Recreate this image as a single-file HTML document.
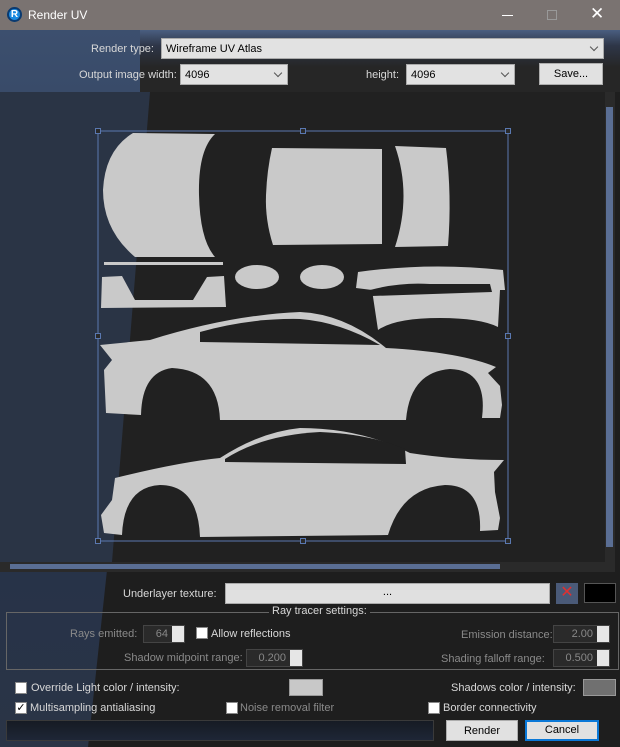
<!DOCTYPE html>
<html><head><style>
*{box-sizing:border-box;margin:0;padding:0}
body{width:620px;height:747px;overflow:hidden;background:#1f1f1f;font-family:"Liberation Sans",sans-serif;font-size:11px;color:#ddd;position:relative}
.a{position:absolute}
.lbl{position:absolute;color:#d8d8d8;white-space:nowrap}
.dis{color:#8a8a8a}
.combo{position:absolute;background:#e2e2e2;border:1px solid #aaa;color:#000;padding:4px 4px;height:21px}
.combo:after{content:"";position:absolute;right:6px;top:5px;width:5px;height:5px;border-right:1px solid #555;border-bottom:1px solid #555;transform:rotate(45deg)}
.btn{position:absolute;background:#e1e1e1;border:1px solid #adadad;color:#000;text-align:center;line-height:20px}
.cb{position:absolute;width:12px;height:12px;background:#fff;border:1px solid #888}
.spin{position:absolute;background:#2a2a2a;border:1px solid #444;color:#888;text-align:right;padding:2px 16px 0 0;height:18px}
.spin:after{content:"";position:absolute;right:0;top:0;width:12px;height:16px;background:#e6e6e6}
</style></head><body>
<div class="a" style="left:0;top:30px;width:620px;height:717px;background:#1e1e1e"></div>
<div class="a" style="left:0;top:30px;width:620px;height:717px;background:linear-gradient(180deg,#3c4f6e,#25324a 60%,#2a3446);clip-path:polygon(0 0,165px 0,88px 717px,0 717px)"></div>
<div class="a" style="left:140px;top:30px;width:480px;height:62px;background:linear-gradient(180deg,#4a5e80 0,#2e3648 25%,#262626 60%)"></div>
<!-- title -->
<div class="a" style="left:0;top:0;width:620px;height:30px;background:#7a7371"></div>
<div class="a" style="left:7px;top:7px;width:15px;height:15px;border-radius:50%;background:#1a8ae0;border:2px solid #0a3a70;color:#fff;font-size:10px;text-align:center;line-height:11px;font-weight:bold">R</div>
<div class="lbl" style="left:28px;top:8px;color:#fff;font-size:12px">Render UV</div>
<div class="a" style="left:502px;top:15px;width:11px;height:1px;background:#fff"></div>
<div class="a" style="left:547px;top:10px;width:10px;height:10px;border:1px solid #999"></div>
<div class="lbl" style="left:590px;top:4px;color:#fff;font-size:17px">✕</div>
<!-- row1 -->
<div class="lbl" style="left:91px;top:43px">Render type:</div>
<div class="combo" style="left:161px;top:38px;width:443px">Wireframe UV Atlas</div>
<div class="lbl" style="left:79px;top:69px">Output image width:</div>
<div class="combo" style="left:180px;top:64px;width:108px">4096</div>
<div class="lbl" style="left:366px;top:69px">height:</div>
<div class="combo" style="left:406px;top:64px;width:109px">4096</div>
<div class="btn" style="left:539px;top:63px;width:64px;height:22px">Save...</div>
<!-- preview -->
<div class="a" style="left:0;top:92px;width:605px;height:470px;background:#212121"></div>
<div class="a" style="left:0;top:92px;width:605px;height:470px;background:#2b3649;clip-path:polygon(0 0,150px 0,112px 470px,0 470px);opacity:.9"></div>
<div class="a" style="left:605px;top:92px;width:10px;height:470px;background:#2a2a2a"></div>
<div class="a" style="left:606px;top:107px;width:7px;height:440px;background:#5a6e94"></div>
<div class="a" style="left:0;top:562px;width:615px;height:10px;background:#2a2a2a"></div>
<div class="a" style="left:10px;top:564px;width:490px;height:5px;background:#5a6e94"></div>
<svg class="a" style="left:0;top:0" width="620" height="747">
<g fill="#c9c9c9">
<path d="M133,133 L215,134 Q198,150 199,195 Q200,240 215,257 L135,257 Q103,230 103,190 Q105,150 133,133Z"/>
<path d="M272,148 L382,149 L382,244 L273,245 Q265,220 266,195 Q267,170 272,148Z"/>
<path d="M395,146 L446,148 Q452,195 448,246 L395,247 Q412,195 395,146Z"/>
<rect x="104" y="262" width="119" height="3"/>
<path d="M102,277 L122,276 L135,300 L193,300 L207,277 L224,276 L226,307 L101,308Z"/>
<ellipse cx="257" cy="277" rx="22" ry="12"/>
<ellipse cx="322" cy="277" rx="22" ry="12"/>
<path d="M358,272 Q430,262 503,270 L505,290 L500,290 L498,327 Q480,318 440,318 Q395,318 378,330 L372,290 L356,288Z"/>
<path d="M100,345 L150,340 Q230,315 300,312 Q345,314 386,348 Q460,352 496,367 L488,373 L500,386 L502,405 L500,418 L482,418 Q488,370 450,369 Q410,372 406,420 L220,420 Q218,370 172,368 Q142,372 141,415 L106,413 L104,370 L112,360Z"/>
<path d="M115,478 Q180,462 220,458 Q260,432 300,428 Q360,428 410,453 Q455,460 504,460 L494,472 L495,492 L500,518 L498,530 L480,531 Q482,485 445,485 Q402,488 388,535 L200,537 Q198,485 160,485 Q124,487 122,535 L104,533 L101,515 L112,500Z"/>
</g>
<g fill="#212121">
<path d="M200,332 Q250,318 300,319 Q340,322 380,345 L200,342Z"/>
<path d="M225,459 Q262,435 320,432 Q370,434 405,449 L406,464 L225,462Z"/>
<path d="M140,285 L190,285 L180,298 L150,298Z"/>
<path d="M370,290 Q400,282 430,284 L490,284 L492,292 L372,296Z"/>
</g>
<rect x="98" y="131" width="410" height="410" fill="none" stroke="#5a78b0" stroke-width="1"/>
<g fill="#2a2a2a" stroke="#5a78b0">
<rect x="95.5" y="128.5" width="5" height="5"/><rect x="300.5" y="128.5" width="5" height="5"/><rect x="505.5" y="128.5" width="5" height="5"/>
<rect x="95.5" y="333.5" width="5" height="5"/><rect x="505.5" y="333.5" width="5" height="5"/>
<rect x="95.5" y="538.5" width="5" height="5"/><rect x="300.5" y="538.5" width="5" height="5"/><rect x="505.5" y="538.5" width="5" height="5"/>
</g>
</svg>
<!-- bottom -->
<div class="lbl" style="left:123px;top:588px">Underlayer texture:</div>
<div class="a" style="left:225px;top:583px;width:325px;height:21px;background:#e0e0e0;border:1px solid #aaa;color:#000;text-align:center;line-height:16px">...</div>
<div class="a" style="left:556px;top:583px;width:22px;height:21px;background:#4a5a78;color:#e03030;text-align:center;font-size:16px;line-height:20px">✕</div>
<div class="a" style="left:584px;top:583px;width:32px;height:20px;background:#000;border:1px solid #555"></div>
<div class="a" style="left:6px;top:612px;width:613px;height:58px;border:1px solid #666;border-top:none"></div>
<div class="a" style="left:370px;top:612px;width:249px;height:1px;background:#666"></div>
<div class="a" style="left:6px;top:612px;width:263px;height:1px;background:#666"></div>
<div class="lbl" style="left:272px;top:605px">Ray tracer settings:</div>
<div class="lbl dis" style="left:70px;top:628px">Rays emitted:</div>
<div class="spin" style="left:143px;top:625px;width:42px">64</div>
<div class="cb" style="left:196px;top:627px"></div>
<div class="lbl" style="left:211px;top:628px">Allow reflections</div>
<div class="lbl dis" style="left:461px;top:629px">Emission distance:</div>
<div class="spin" style="left:553px;top:625px;width:57px">2.00</div>
<div class="lbl dis" style="left:124px;top:652px">Shadow midpoint range:</div>
<div class="spin" style="left:246px;top:649px;width:57px">0.200</div>
<div class="lbl dis" style="left:441px;top:653px">Shading falloff range:</div>
<div class="spin" style="left:553px;top:649px;width:57px">0.500</div>
<div class="cb" style="left:15px;top:682px"></div>
<div class="lbl" style="left:31px;top:682px">Override Light color / intensity:</div>
<div class="a" style="left:289px;top:679px;width:34px;height:17px;background:#c8c8c8;border:1px solid #999"></div>
<div class="lbl" style="left:451px;top:682px">Shadows color / intensity:</div>
<div class="a" style="left:583px;top:679px;width:33px;height:17px;background:#707070;border:1px solid #999"></div>
<div class="cb" style="left:15px;top:702px;background:#fff;color:#000;font-size:11px;line-height:10px;text-align:center">✓</div>
<div class="lbl" style="left:30px;top:702px">Multisampling antialiasing</div>
<div class="cb" style="left:226px;top:702px"></div>
<div class="lbl dis" style="left:240px;top:702px">Noise removal filter</div>
<div class="cb" style="left:428px;top:702px"></div>
<div class="lbl" style="left:443px;top:702px">Border connectivity</div>
<div class="a" style="left:6px;top:720px;width:428px;height:21px;background:linear-gradient(#161b24,#1e2636);border:1px solid #3a3a3a"></div>
<div class="btn" style="left:446px;top:720px;width:72px;height:21px">Render</div>
<div class="btn" style="left:525px;top:720px;width:74px;height:21px;border:2px solid #0a78d7;line-height:17px">Cancel</div>
</body></html>
